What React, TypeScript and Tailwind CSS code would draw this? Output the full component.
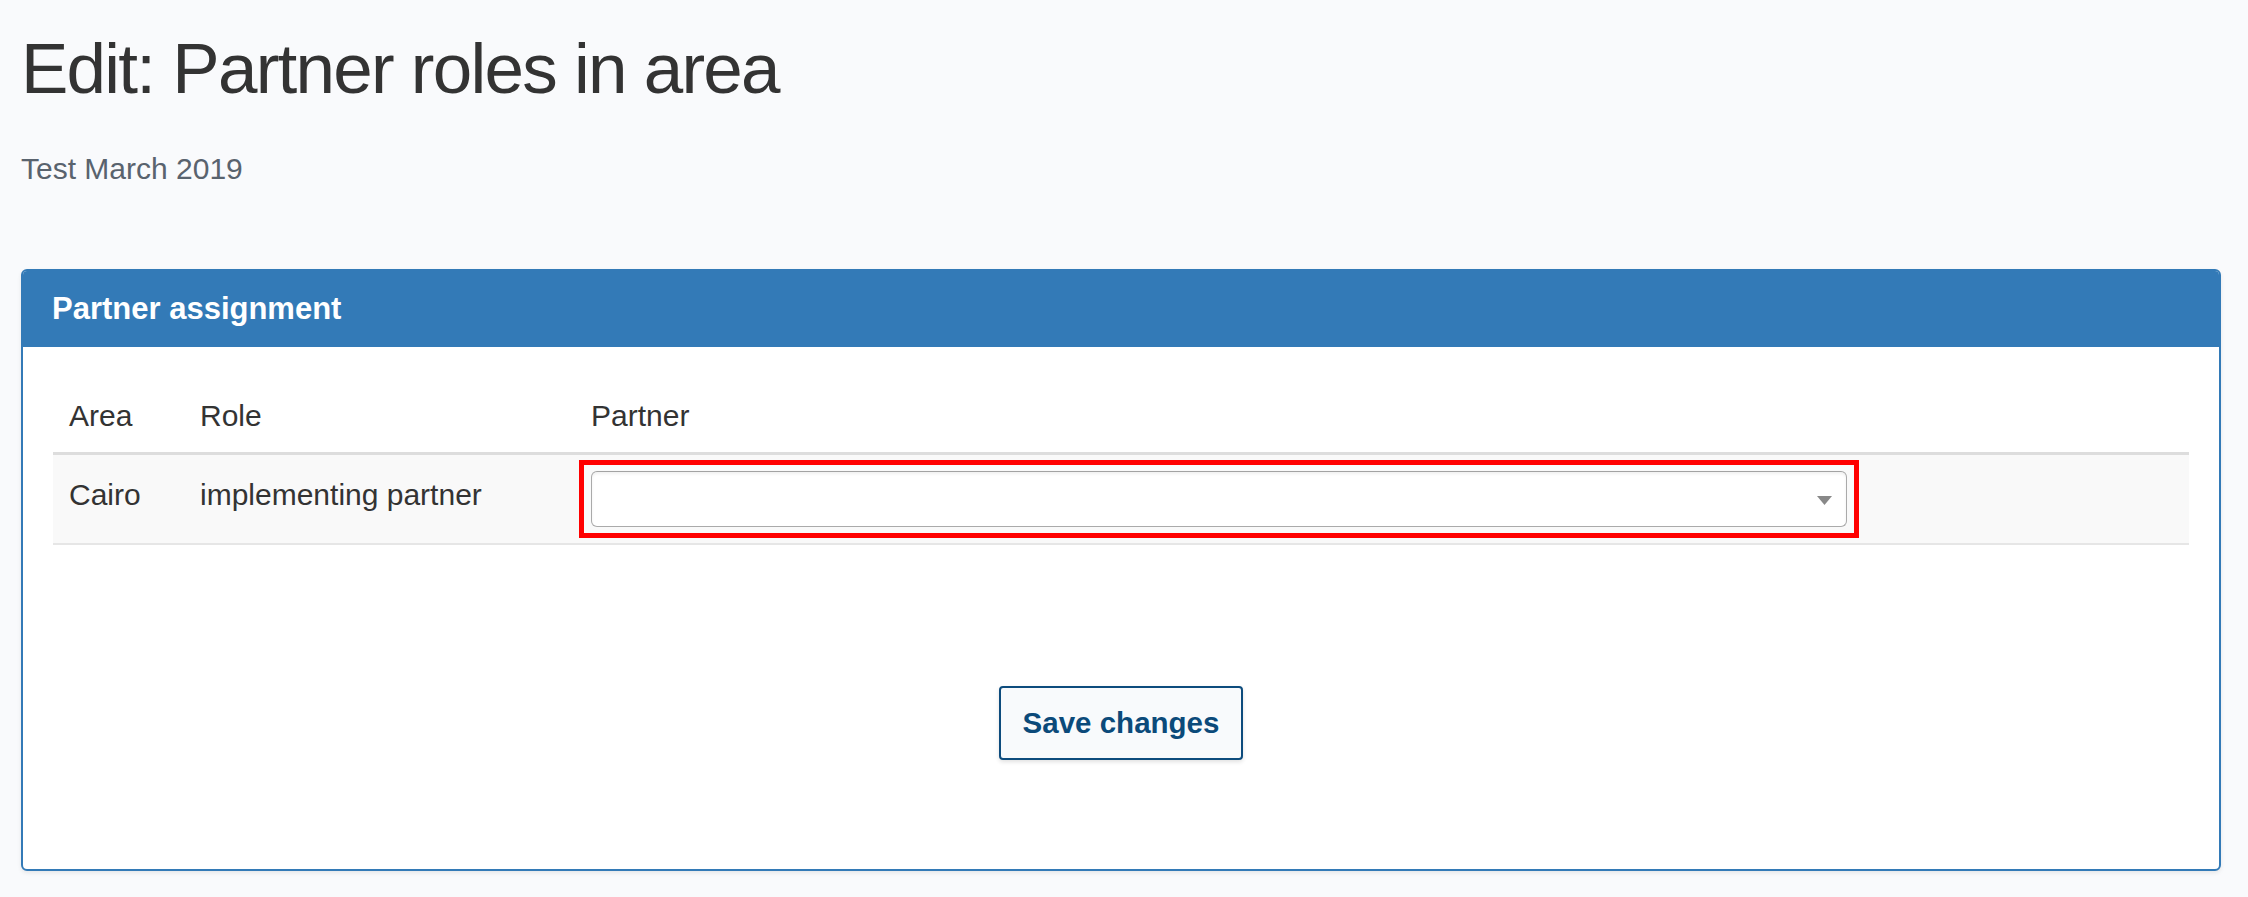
import React from "react";

export default function App() {
  return (
    <div
      className="min-h-[897px] w-full bg-[#f9fafc] text-[#333333]"
      style={{ fontFamily: '"Liberation Sans", Arial, Helvetica, sans-serif' }}
    >
      <div className="pl-[21px] pr-[27px] pt-[30px] pb-[27px]">
        <h1 className="text-[71px] leading-[77px] tracking-[-1.75px] font-normal text-[#333333]">
          Edit: Partner roles in area
        </h1>
        <p className="mt-[42px] text-[30px] leading-[40px] text-[#59636e]">Test March 2019</p>

        <div className="mt-[80px] rounded-[6px] border-2 border-[#337ab7] bg-white shadow-[0_2px_4px_rgba(0,0,0,0.08)] overflow-hidden">
          <div className="bg-[#337ab7] px-[29px] h-[76px] leading-[76px] text-[31px] font-bold text-white">
            Partner assignment
          </div>
          <div className="px-[30px] pt-[32px] pb-[109px]">
            <table className="w-full border-collapse text-[30px] text-[#333333]">
              <thead>
                <tr className="border-b-[3px] border-[#dddddd]">
                  <th className="w-[131px] px-[16px] py-[16px] text-left font-normal leading-[41px] align-bottom">
                    Area
                  </th>
                  <th className="w-[391px] px-[16px] py-[16px] text-left font-normal leading-[41px] align-bottom">
                    Role
                  </th>
                  <th className="w-[1288px] px-[16px] py-[16px] text-left font-normal leading-[41px] align-bottom">
                    Partner
                  </th>
                  <th className="px-[16px] py-[16px]"></th>
                </tr>
              </thead>
              <tbody>
                <tr className="bg-[#f9f9f9] border-b-2 border-[#e6e6e6]">
                  <td className="px-[16px] pt-[18px] pb-[16px] align-top leading-[44px]">Cairo</td>
                  <td className="px-[16px] pt-[18px] pb-[16px] align-top leading-[44px]">implementing partner</td>
                  <td className="px-[16px] py-[16px] align-top">
                    <div className="relative">
                      <div className="absolute -left-[12px] -right-[12px] -top-[11px] -bottom-[11px] border-[5px] border-[#ff0000] pointer-events-none"></div>
                      <div className="relative h-[56px] rounded-[6px] border border-[#aaaaaa] border-t-[#a3a3a3] bg-white shadow-[inset_0_2px_3px_rgba(0,0,0,0.06)]">
                        <svg
                          className="absolute right-[14px] top-[24px]"
                          width="15"
                          height="9"
                          viewBox="0 0 15 9"
                        >
                          <polygon points="0,0 15,0 7.5,9" fill="#888888" />
                        </svg>
                      </div>
                    </div>
                  </td>
                  <td className="px-[16px] py-[16px]"></td>
                </tr>
              </tbody>
            </table>

            <div className="mt-[141px] flex justify-center">
              <button className="flex h-[74px] w-[244px] items-center justify-center rounded-[4px] border-2 border-[#0d4c7d] bg-[#f8fafc] text-[29.5px] font-bold text-[#0b4a7a] shadow-[0_2px_4px_rgba(0,0,0,0.12)]">
                Save changes
              </button>
            </div>
          </div>
        </div>
      </div>
    </div>
  );
}
